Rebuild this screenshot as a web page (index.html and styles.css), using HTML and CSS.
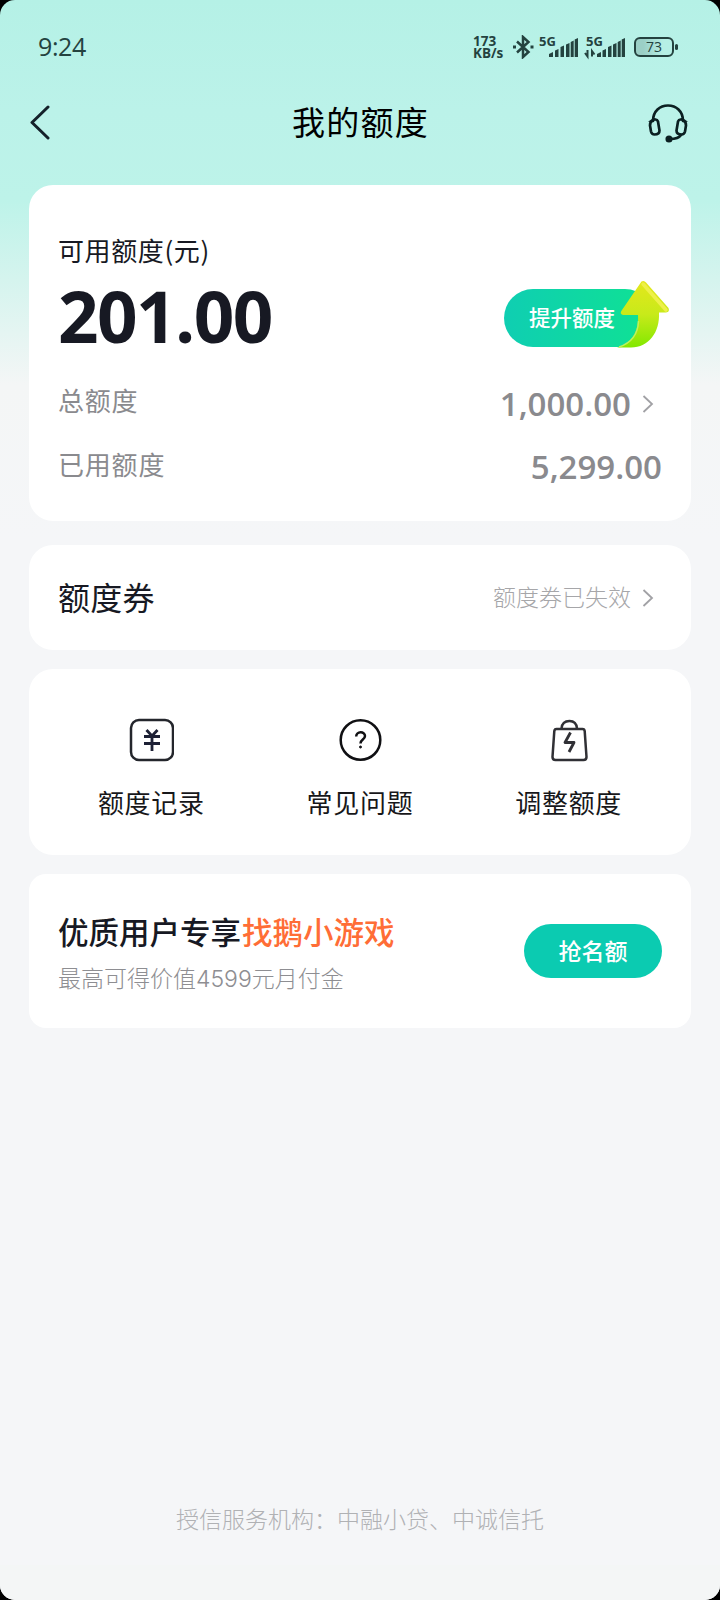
FILE: index.html
```html
<!DOCTYPE html>
<html lang="zh-CN">
<head>
<meta charset="utf-8">
<title>我的额度</title>
<link rel="stylesheet" href="styles.css">
</head>
<body>
<div class="screen">
  <div class="status">
    <span class="time">9:24</span>
    <div class="status-right">
      <div class="speed"><span>173</span><span>KB/s</span></div>
      <svg class="bt" width="22" height="24" viewBox="0 0 22 24" fill="none" stroke="#24423f" stroke-width="2.5"><path d="M5 6.5 16.5 17 11 22V2l5.500 5L5 17.500"/><path d="M1 12h3M18.500 12h3" stroke-width="3"/></svg>
      <svg class="sig" width="40" height="24" viewBox="0 0 40 24" fill="#24423f"><text x="0" y="11" class="g5">5G</text><path d="M10 19l4-2v5h-4zM16 15.500l3.500-1.500v8H16zM21.500 12l3.500-1.500V22h-3.500zM27 9.500 30.500 8v14H27zM31.700 7l3-1.500V22h-3zM35.700 4.500 39 3v19h-3.300z"/></svg>
      <svg class="sig sig2" width="40" height="24" viewBox="0 0 40 24" fill="#24423f"><text x="0" y="11" class="g5">5G</text><path d="M11 19l4-2v5h-4zM16.500 15.500l3.500-1.500v8h-3.500zM22 12l3.500-1.500V22H22zM27 9.500 30.500 8v14H27zM31.700 7l3-1.500V22h-3zM35.700 4.500 39 3v19h-3.300z"/><path d="M1.500 15.500V20M-1 18l2.500 3.500V15M6 21.500V16l2.500 3.500" fill="none" stroke="#24423f" stroke-width="2"/></svg>
      <div class="battery"><span>73</span></div>
    </div>
  </div>
  <div class="nav">
    <svg width="22" height="38" viewBox="0 0 22 38" fill="none" stroke="#14212a" stroke-width="3" stroke-linecap="round" stroke-linejoin="round"><path d="M18 3 2 18.500 18 34"/></svg>
    <h1>我的额度</h1>
    <svg width="40" height="40" viewBox="0 0 40 40" fill="none" stroke="#0b2022" stroke-width="2.700" stroke-linecap="round"><path d="M5 18C5 8 12 2.500 20 2.500S35 8 35 18"/><path d="M4 17.500c2-1.500 5-1.500 6 1l1.500 9c0 3-2 4-5 4-2 0-3-1-3.500-3l-1-6c0-2 .5-4 2.500-5ZM36 17.500c-2-1.500-5-1.500-6 1l-1.500 9c0 3 2 4 5 4 2 0 3-1 3.500-3l1-6c0-2-.5-4-2.500-5Z"/><path d="M33 32c-2 3-6 4-11 4"/><circle cx="21" cy="36" r="2.200" fill="#0b2022"/></svg>
  </div>
  <main class="cards">
    <section class="card quota">
      <div class="label">可用额度(元)</div>
      <div class="main-row">
        <strong class="amount">201.00</strong>
        <div class="boost">提升额度
          <svg class="arrow" width="54" height="72" viewBox="0 0 54 72"><defs><linearGradient id="ag" x1="0" y1="0" x2="0" y2="1"><stop offset="0" stop-color="#e4e71c"/><stop offset=".5" stop-color="#c8ea1a"/><stop offset="1" stop-color="#82e800"/></linearGradient></defs><path d="M25.500 2.500Q28 1 30 3.500L52.500 29Q54 33 50 33.500H43C44 53 33 68.500 15 68.500H1C15 65 23 53 22 36H7Q3 35 6 31Z" fill="url(#ag)"/><path d="M27 5 50 31" fill="none" stroke="#eef04a" stroke-width="3.500" stroke-linecap="round"/><path d="M3 68C15 64 22 56 22.500 42" fill="none" stroke="#bdf05f" stroke-width="1.500"/></svg>
        </div>
      </div>
      <div class="line total"><span>总额度</span><b>1,000.00</b><svg width="12" height="20" viewBox="0 0 12 20" class="chev"><path d="M1.500 2 10 10 1.500 18"/></svg></div>
      <div class="line used"><span>已用额度</span><b>5,299.00</b></div>
    </section>
    <section class="card coupon">
      <h2>额度券</h2><span>额度券已失效</span><svg width="12" height="20" viewBox="0 0 12 20" class="chev"><path d="M1.500 2 10 10 1.500 18"/></svg>
    </section>
    <section class="card tools">
      <div class="tool"><svg width="46" height="46" viewBox="0 0 46 46" fill="none" stroke="#24262c" stroke-width="2.500"><rect x="3" y="3" width="42" height="40" rx="8"/><path d="M18.500 13 24 19l5.500-6M16 19.500h16M16 26.500h16M24 19v15" stroke="#1d2035" stroke-width="2.800"/></svg><span>额度记录</span></div>
      <div class="tool"><svg width="46" height="46" viewBox="0 0 46 46" fill="none" stroke="#101013" stroke-width="2.500"><circle cx="23.500" cy="23" r="19.800"/><path d="M19.200 19.500c0-5.500 8.800-5.500 8.800-.5 0 3.700-4.500 3.500-4.500 7.500" stroke-width="2.500"/><circle cx="23.500" cy="30" r="1" stroke-width="1" fill="#101013"/></svg><span>常见问题</span></div>
      <div class="tool"><svg width="46" height="46" viewBox="0 0 46 46" fill="none" stroke="#303035" stroke-width="2.500" stroke-linejoin="round"><path d="M10.500 12h26q2 0 2.200 2.200L40.500 40q0 3-3 3h-28q-3 0-3-3l1.800-25.800q.2-2.200 2.200-2.200Z"/><path d="M15.500 11.500C16 6 19 4 23.500 4s7 2 7.500 7.500"/><path d="m24.500 15.500-5.500 10h9L23 35" stroke-width="2.800"/></svg><span>调整额度</span></div>
    </section>
    <section class="card promo">
      <div><h3>优质用户专享<em>找鹅小游戏</em></h3><p>最高可得价值4599元月付金</p></div>
      <div class="grab">抢名额</div>
    </section>
  </main>
  <footer>授信服务机构：中融小贷、中诚信托</footer>
  <div class="gesture"></div>
</div>
</body>
</html>
```
FILE: styles.css
```css
* { box-sizing: border-box; }
body { margin: 0; background: #000; }
h1, h2, h3, p { margin: 0; font-weight: 400; }
svg { display: block; flex: none; }
.screen {
  width: 720px; height: 1600px; overflow: hidden; border-radius: 15px;
  display: flex; flex-direction: column; color: #171923;
  font-family: "Noto Sans CJK SC", sans-serif;
  background: linear-gradient(#b5f1e6 0, #bbf2e9 110px, #bdf3e9 200px, #d5f4ee 280px, #f4f6f6 385px, #f5f6f8 540px);
}
.status { height: 90px; padding: 3px 41px 0 38px; display: flex; align-items: center; justify-content: space-between; color: #24423f; font-family: "Open Sans", sans-serif; }
.time { font-size: 25px; font-weight: 500; letter-spacing: -.4px; padding-bottom: 2px; }
.status-right { display: flex; align-items: center; }
.speed { width: 39px; display: flex; flex-direction: column; font-size: 13.500px; line-height: 12px; font-weight: 700; }
.sig { margin-left: 5px; overflow: visible; }
.sig2 { margin-left: 7px; }
.g5 { font: 700 13px "Open Sans", sans-serif; }
.battery { position: relative; width: 40px; height: 20px; margin: 0 5px 0 8px; border: 2px solid #24423f; border-radius: 6px; background: linear-gradient(90deg, #9bcfc6 20%, #b6efe5 75%); text-align: center; font-size: 14px; font-weight: 500; line-height: 16px; }
.battery::after { content: ""; position: absolute; right: -6px; top: 5px; width: 3px; height: 6px; border-radius: 2px; background: #24423f; }
.nav { height: 66px; padding: 0 32px 0 30px; display: flex; align-items: center; justify-content: space-between; }
.nav h1 { font-size: 33px; line-height: 48px; letter-spacing: 1.2px; padding: 0 0 4px 21px; color: #000; }
.cards { padding: 29px 29px 0; display: flex; flex-direction: column; }
.card { background: #fff; border-radius: 24px; padding: 0 29px; }
.quota { height: 336px; padding-top: 45px; }
.label { font-size: 26px; line-height: 40px; letter-spacing: .6px; }
.main-row { height: 98px; padding-bottom: 3px; display: flex; align-items: center; justify-content: space-between; }
.amount { font: 700 71px/90px "Open Sans", sans-serif; letter-spacing: -1.6px; padding-bottom: 4px; }
.boost { position: relative; width: 150px; height: 58px; margin-right: 8px; padding-left: 25px; border-radius: 29px; background: linear-gradient(90deg, #0fceb2, #0fe293); color: #fff; font-size: 21.500px; line-height: 55px; font-weight: 500; white-space: nowrap; }
.arrow { position: absolute; right: -16px; top: -10px; }
.line { height: 63px; display: flex; align-items: center; color: #8a8a8e; }
.line span { font-size: 26px; letter-spacing: .8px; margin-right: auto; }
.line b { font: 600 33px/44px "Open Sans", sans-serif; padding-top: 9px; }
.used span { padding-top: 2px; }
.chev { fill: none; stroke: #a1a1a5; stroke-width: 1.800; margin: 0 8px 0 11px; }
.total .chev { margin-top: 9px; }
.coupon { height: 105px; margin-top: 24px; display: flex; align-items: center; }
.coupon h2 { font-size: 32px; letter-spacing: .3px; margin-right: auto; padding-bottom: 3px; }
.coupon span { font-size: 23px; color: #a6a6a9; font-weight: 300; padding-bottom: 4px; }
.tools { height: 186px; margin-top: 19px; padding: 48px 18px 0; display: flex; }
.tool { flex: 1; display: flex; flex-direction: column; align-items: center; }
.tool span { font-size: 26px; line-height: 38px; letter-spacing: .7px; margin-top: 20px; color: #17171a; }
.promo { height: 154px; margin-top: 19px; border-radius: 17px; display: flex; align-items: center; justify-content: space-between; }
.promo h3 { font-size: 30.500px; line-height: 46px; font-weight: 500; }
.promo em { font-style: normal; color: #ff6d36; padding-left: 1px; }
.promo p { font-family: Inter, "Noto Sans CJK SC", sans-serif; font-size: 23px; line-height: 36px; margin: 7px 0 -3px; color: #8e8e92; font-weight: 300; }
.grab { width: 138px; height: 54px; border-radius: 27px; background: #0bcbb1; color: #fff; text-align: center; font-size: 23px; line-height: 53px; font-weight: 500; }
footer { margin-top: auto; height: 64px; text-align: center; font-size: 23px; line-height: 34px; color: #b0b1b4; font-weight: 300; }
.gesture { height: 35px; background: #f4f6f6; }
```
